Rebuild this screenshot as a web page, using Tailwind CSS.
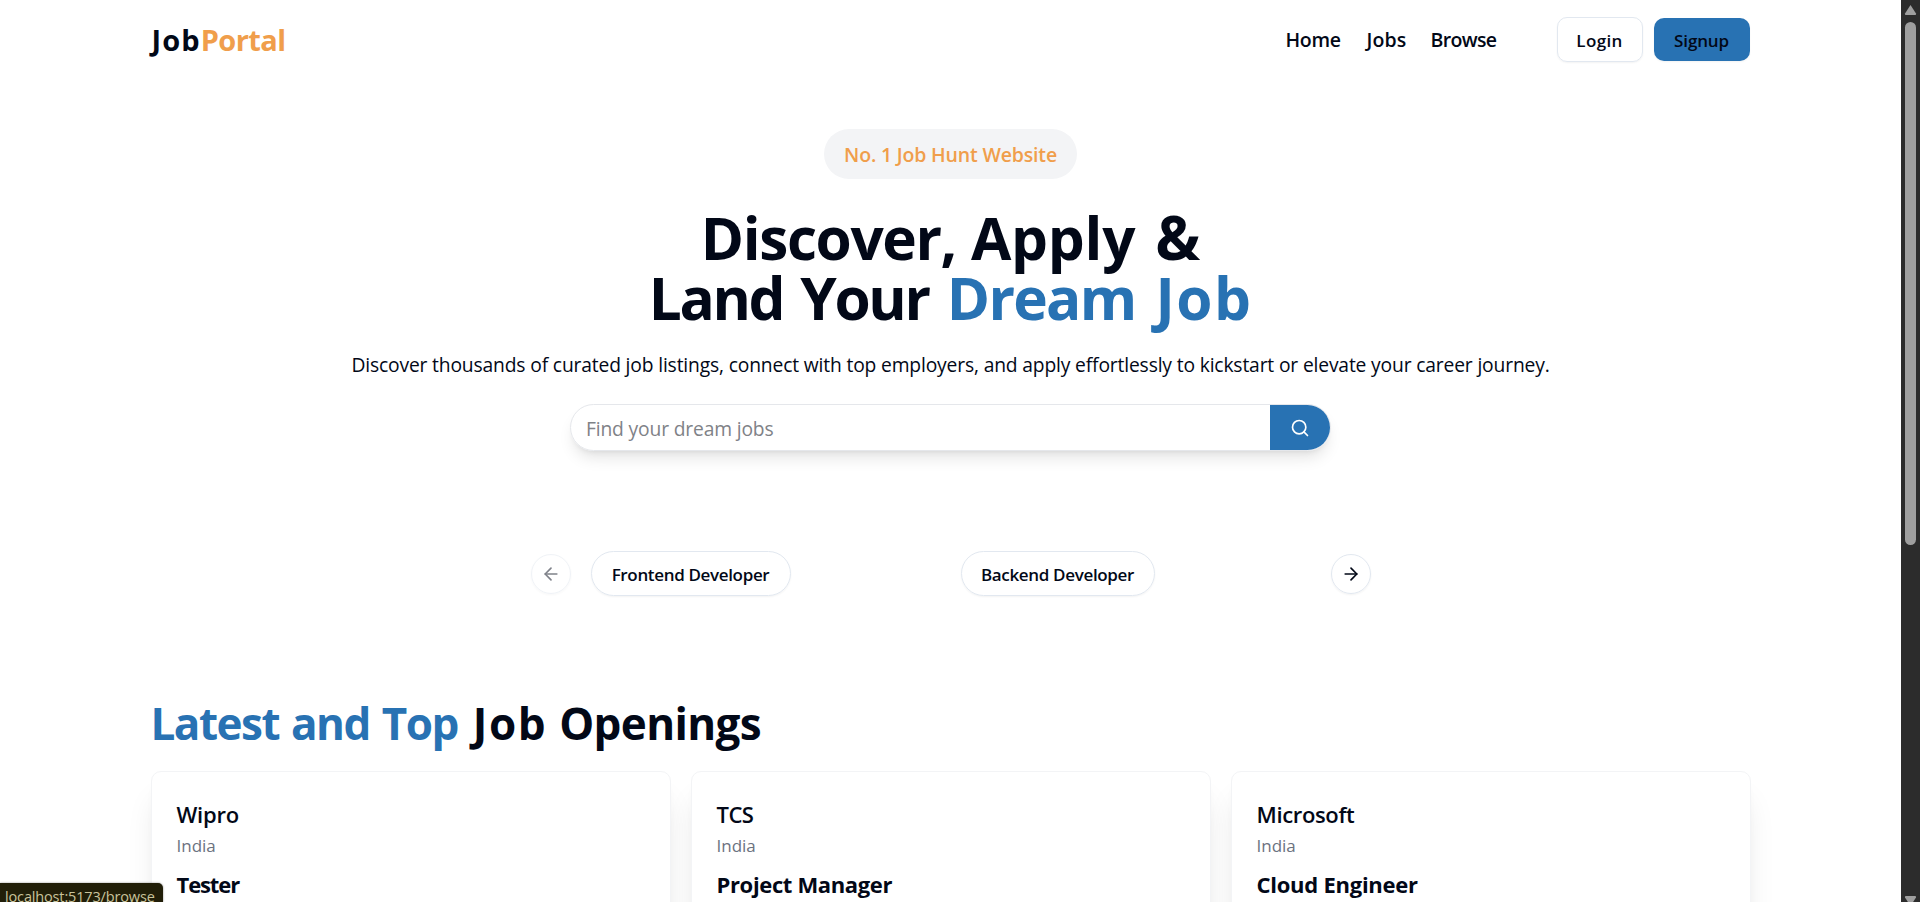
<!DOCTYPE html>
<html lang="en">
<head>
<meta charset="utf-8">
<title>JobPortal</title>
<script src="https://cdn.jsdelivr.net/npm/@tailwindcss/browser@4"></script>
</head>
<body class="bg-white text-[#020817] font-['Open_Sans',sans-serif] w-[1920px] h-[902px] overflow-hidden flex relative">
<div class="w-[1901px] h-[902px] overflow-hidden shrink-0">
  <header class="w-[1600px] mx-auto h-[79px] mb-px flex items-center justify-between">
    <h1 class="text-[29px] leading-10 font-bold pl-px whitespace-nowrap"><span class="tracking-[1.1px]">Job</span><span class="tracking-[-0.6px] text-[#f09e4b]">Portal</span></h1>
    <div class="flex items-center pr-px">
      <ul class="flex text-[19.5px] leading-7 pt-px font-semibold whitespace-nowrap">
        <li class="w-[81px] tracking-[-0.3px]">Home</li>
        <li class="w-[64px] tracking-[0.1px]">Jobs</li>
        <li class="w-[126px] tracking-[-0.66px]">Browse</li>
      </ul>
      <div class="flex items-center gap-[11px] text-[17px] leading-6 font-semibold">
        <button class="w-[86px] h-[45px] pt-[2px] rounded-[10px] border border-[#e2e8f0] shadow-xs tracking-[0.35px]">Login</button>
        <button class="w-[96px] h-[43px] pt-[2px] rounded-[10px] bg-[#2872b3] shadow-xs tracking-[-0.15px]">Signup</button>
      </div>
    </div>
  </header>

  <section class="flex flex-col items-center whitespace-nowrap">
    <span class="mt-[49px] w-[253px] h-[50px] pt-[2px] rounded-full bg-[#f3f4f6] text-[#f09e4b] text-[19.5px] font-semibold tracking-[-0.17px] flex items-center justify-center">No. 1 Job Hunt Website</span>
    <h2 class="mt-[28px] h-[120px] text-[58.5px] leading-[60px] font-bold flex flex-col items-center">
      <span class="flex gap-[15px]"><span class="tracking-[-1.4px]">Discover,</span><span class="tracking-[-0.25px]">Apply</span><span class="pl-[5px] text-[60px]">&amp;</span></span>
      <span class="flex"><span class="tracking-[-2.3px] [word-spacing:4px]">Land Your</span><span class="pl-[18px] text-[#2872b3] tracking-[-1.7px]">Dream</span><span class="pl-[20px] text-[#2872b3] tracking-[1.4px]">Job</span></span>
    </h2>
    <p class="mt-6 text-[19.25px] leading-7 tracking-[-0.155px]">Discover thousands of curated job listings, connect with top employers, and apply effortlessly to kickstart or elevate your career journey.</p>
    <div class="mt-[25px] w-[761px] h-[47px] rounded-full border border-[#e5e7eb] shadow-[0_10px_15px_-3px_rgba(0,0,0,0.1),0_4px_6px_-4px_rgba(0,0,0,0.1)] flex items-center justify-between overflow-hidden">
      <span class="pl-[15px] pt-[3px] text-[19.25px] leading-7 tracking-[-0.16px] text-[#7f8287]">Find your dream jobs</span>
      <button class="w-[60px] h-full bg-[#2872b3] text-white flex items-center justify-center">
        <svg class="w-5 h-5" viewBox="0 0 24 24" fill="none" stroke="currentColor" stroke-width="2" stroke-linecap="round" stroke-linejoin="round"><circle cx="11" cy="11" r="8"/><path d="m21 21-4.3-4.3"/></svg>
      </button>
    </div>
    <div class="mt-[100px] w-[840px] h-[45px] flex items-center text-[17px] font-semibold">
      <button class="w-10 h-10 mr-5 rounded-full border border-[#e2e8f0] shadow-xs opacity-50 flex items-center justify-center">
        <svg class="w-5 h-5" viewBox="0 0 24 24" fill="none" stroke="currentColor" stroke-width="2" stroke-linecap="round" stroke-linejoin="round"><path d="m12 19-7-7 7-7"/><path d="M19 12H5"/></svg>
      </button>
      <div class="w-[370px]"><button class="w-[200px] h-[45px] pt-[2px] rounded-full border border-[#e2e8f0] shadow-xs tracking-[-0.34px]">Frontend Developer</button></div>
      <div class="w-[370px]"><button class="w-[194px] h-[45px] pt-[2px] rounded-full border border-[#e2e8f0] shadow-xs tracking-[-0.33px]">Backend Developer</button></div>
      <button class="w-10 h-10 rounded-full border border-[#e2e8f0] shadow-xs flex items-center justify-center">
        <svg class="w-5 h-5" viewBox="0 0 24 24" fill="none" stroke="currentColor" stroke-width="2" stroke-linecap="round" stroke-linejoin="round"><path d="M5 12h14"/><path d="m12 5 7 7-7 7"/></svg>
      </button>
    </div>
  </section>

  <section class="w-[1600px] mx-auto mt-[102px] whitespace-nowrap">
    <h2 class="text-[44px] leading-[50px] font-bold flex"><span class="text-[#2872b3] tracking-[-1.5px] [word-spacing:2px]">Latest and Top</span><span class="tracking-[1.6px] pl-[15px]">Job</span><span class="tracking-[-0.65px] pl-[12px]">Openings</span></h2>
    <div class="mt-[23px] grid grid-cols-3 gap-5">
      <article class="h-[300px] rounded-[10px] border border-[#f3f4f6] p-[25px] bg-white shadow-[0_25px_31px_-6px_rgba(0,0,0,0.1),0_10px_12px_-7px_rgba(0,0,0,0.1)]">
        <h3 class="text-[22px] leading-[35px] font-semibold tracking-[-0.2px]">Wipro</h3>
        <p class="mt-px text-[17px] leading-[25px] text-[#6b7280]">India</p>
        <h4 class="mt-[9px] text-[22px] leading-[35px] font-bold tracking-[-1.1px]">Tester</h4>
      </article>
      <article class="h-[300px] rounded-[10px] border border-[#f3f4f6] p-[25px] bg-white shadow-[0_25px_31px_-6px_rgba(0,0,0,0.1),0_10px_12px_-7px_rgba(0,0,0,0.1)]">
        <h3 class="text-[22px] leading-[35px] font-semibold tracking-[-0.5px]">TCS</h3>
        <p class="mt-px text-[17px] leading-[25px] text-[#6b7280]">India</p>
        <h4 class="mt-[9px] text-[22px] leading-[35px] font-bold tracking-[-0.35px]">Project Manager</h4>
      </article>
      <article class="h-[300px] rounded-[10px] border border-[#f3f4f6] p-[25px] bg-white shadow-[0_25px_31px_-6px_rgba(0,0,0,0.1),0_10px_12px_-7px_rgba(0,0,0,0.1)]">
        <h3 class="text-[22px] leading-[35px] font-semibold tracking-[-0.35px]">Microsoft</h3>
        <p class="mt-px text-[17px] leading-[25px] text-[#6b7280]">India</p>
        <h4 class="mt-[9px] text-[22px] leading-[35px] font-bold tracking-[-0.25px]">Cloud Engineer</h4>
      </article>
    </div>
  </section>
</div>

<!-- Browser scrollbar -->
<aside class="w-[19px] h-[902px] bg-[#2c2c2c] shrink-0 flex flex-col items-center">
  <svg class="mt-[4px] w-[13px] h-[11px] shrink-0" viewBox="0 0 13 11" fill="#9f9f9f"><path d="M6.5 1 L12 9.5 Q12.4 11 11 11 H2 Q.6 11 1 9.5Z"/></svg>
  <div class="mt-[7px] w-[11px] h-[523px] rounded-full bg-[#9f9f9f] shrink-0"></div>
  <svg class="mt-[351px] w-[13px] h-[11px] shrink-0" viewBox="0 0 13 11" fill="#9f9f9f"><path d="M6.5 10 L12 1.5 Q12.4 0 11 0 H2 Q.6 0 1 1.5Z"/></svg>
</aside>

<!-- Link status bubble -->
<div class="absolute left-0 bottom-0 w-[163px] h-[19px] overflow-hidden rounded-tr-[5px] bg-[#211e08] shadow-[0_0_2px_rgba(0,0,0,0.5)] text-[#c9c39b] text-[14.5px] leading-5 tracking-[-0.15px] pl-[5px] pt-[4px] whitespace-nowrap">localhost:5173/browse</div>
</body>
</html>
